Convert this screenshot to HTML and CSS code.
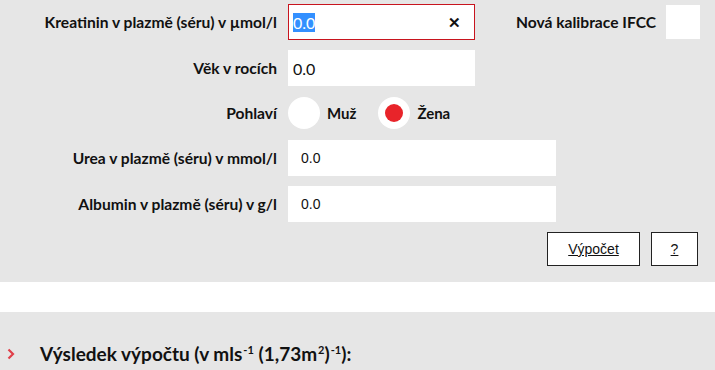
FILE: index.html
```html
<!DOCTYPE html>
<html lang="cs">
<head>
  <meta charset="UTF-8" />
  <title>Výpočet clearance kreatininu</title>
  <link rel="stylesheet" href="styles.css">
</head>
<body>

  <!-- Formular -->
  <div class="calc">
    <div class="form-grid">
      <label class="lbl" for="kreatinin">Kreatinin v plazmě (séru) v µmol/l</label>
      <div class="field">
        <div class="input-box focused">
          <input type="text" id="kreatinin" class="inp" value="0.0" />
          <span class="clear">✕</span>
        </div>
        <span class="lbl ifcc">Nová kalibrace IFCC</span>
        <span class="check"></span>
      </div>

      <label class="lbl" for="vek">Věk v rocích</label>
      <div class="field">
        <div class="input-box">
          <input type="text" id="vek" class="inp" value="0.0" />
        </div>
      </div>

      <span class="lbl">Pohlaví</span>
      <div class="field radios">
        <label class="radio"><span class="dot"></span>Muž</label>
        <label class="radio"><span class="dot on"></span>Žena</label>
      </div>

      <label class="lbl" for="urea">Urea v plazmě (séru) v mmol/l</label>
      <div class="field">
        <input type="text" id="urea" class="inp wide" value="0.0" />
      </div>

      <label class="lbl" for="albumin">Albumin v plazmě (séru) v g/l</label>
      <div class="field">
        <input type="text" id="albumin" class="inp wide" value="0.0" />
      </div>
    </div>

    <div class="buttons">
      <button class="btn calc-btn">Výpočet</button>
      <button class="btn help-btn">?</button>
    </div>
  </div>

  <div class="gap-band"></div>

  <!-- Vysledek -->
  <div class="result">
    <svg class="chev" width="8" height="12" viewBox="0 0 8 12">
      <polyline points="1.5,1.5 6,6 1.5,10.5" fill="none" stroke="#e0404a" stroke-width="2.2" />
    </svg>
    <h2>Výsledek výpočtu (v mls<sup>-1</sup> (1,73m<sup>2</sup>)<sup>-1</sup>):</h2>
  </div>

  <script>
    // oznacit hodnotu v prvnim poli
    var k = document.getElementById('kreatinin');
    k.focus();
    k.select();
  </script>

</body>
</html>
```

FILE: styles.css
```css
body {
  margin: 0;
  background: #e6e6e6;
  font-family: Lato, "Noto Sans", sans-serif;
  color: #111;
}

.calc {
  padding: 4px 17px 16px 0;
}

.form-grid {
  display: grid;
  grid-template-columns: 277px auto;
  column-gap: 11px;
  row-gap: 10px;
  align-items: center;
}

.lbl {
  font-weight: bold;
  font-size: 15.6px;
  text-align: right;
  white-space: nowrap;
}

.field {
  display: flex;
  align-items: center;
}

.input-box {
  display: flex;
  align-items: center;
  width: 187px;
  height: 36px;
  box-sizing: border-box;
  background: #fff;
  border: 1px solid #fff;
}

.input-box.focused {
  border-color: #c8141e;
}

.inp {
  border: none;
  outline: none;
  background: #fff;
  font-family: Lato, "Noto Sans", sans-serif;
  font-size: 16px;
  color: #111;
  padding: 0 0 0 4px;
  height: 34px;
  flex: 1;
  min-width: 0;
}

.inp::selection {
  background: #3390ff;
  color: #fff;
}

.clear {
  font-size: 15px;
  font-weight: bold;
  padding: 0 13px 0 8px;
  color: #111;
}

.inp.wide {
  flex: none;
  width: 268px;
  height: 36px;
  box-sizing: border-box;
  padding-left: 13px;
  font-family: "Liberation Sans", Arial, sans-serif;
  font-size: 14px;
}

.ifcc {
  margin-left: 41px;
}

.check {
  width: 34px;
  height: 34px;
  margin-left: 10px;
  background: #fff;
}

.radios {
  height: 34px;
}

.radio {
  display: flex;
  align-items: center;
  font-weight: bold;
  font-size: 15px;
  margin-right: 22px;
}

.dot {
  width: 32px;
  height: 32px;
  border-radius: 50%;
  background: #fff;
  margin-right: 7px;
  display: flex;
  align-items: center;
  justify-content: center;
}

.dot.on::after {
  content: "";
  width: 18px;
  height: 18px;
  border-radius: 50%;
  background: #e8242a;
}

.buttons {
  display: flex;
  justify-content: flex-end;
  gap: 11px;
  margin-top: 10px;
}

.btn {
  height: 34px;
  background: #fff;
  border: 1px solid #222;
  font-family: "Liberation Sans", Arial, sans-serif;
  font-size: 14px;
  text-decoration: underline;
  color: #111;
  padding: 0;
}

.calc-btn {
  width: 93px;
}

.help-btn {
  width: 47px;
}

.gap-band {
  height: 30px;
  background: #fff;
}

.result {
  display: flex;
  align-items: center;
  padding: 30px 0 0 7px;
}

.chev {
  margin-right: 25px;
}

.result h2 {
  margin: 0;
  font-size: 19px;
  font-weight: bold;
}

.result sup {
  font-size: 11px;
  margin-left: 1px;
}
```
